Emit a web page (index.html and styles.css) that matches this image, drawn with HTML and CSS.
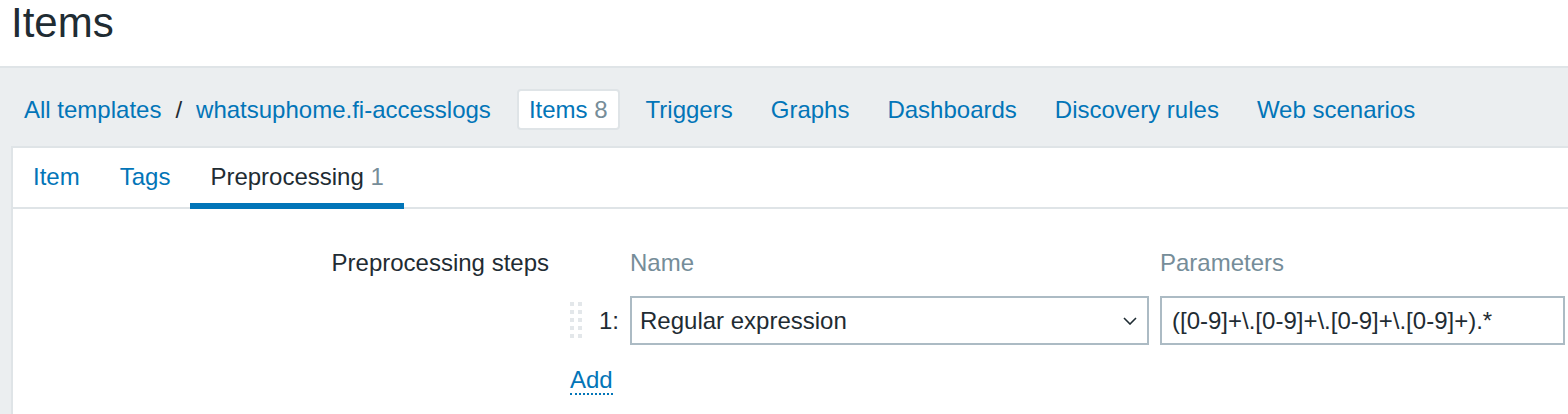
FILE: index.html
```html
<!DOCTYPE html>
<html lang="en">
<head>
    <meta charset="UTF-8">
    <title>Items</title>
    <link rel="stylesheet" href="styles.css">
</head>
<body>
    <header class="page-header">
        <h1>Items</h1>
    </header>
    <div class="main">
        <nav class="breadcrumbs">
            <a href="#">All templates</a>
            <span class="sep">/</span>
            <a href="#">whatsuphome.fi-accesslogs</a>
            <ul class="host-nav">
                <li class="selected"><a href="#">Items <span class="count">8</span></a></li>
                <li><a href="#">Triggers</a></li>
                <li><a href="#">Graphs</a></li>
                <li><a href="#">Dashboards</a></li>
                <li><a href="#">Discovery rules</a></li>
                <li><a href="#">Web scenarios</a></li>
            </ul>
        </nav>
        <div class="content">
            <ul class="tabs">
                <li><a href="#">Item</a></li>
                <li><a href="#">Tags</a></li>
                <li class="active"><a href="#">Preprocessing <span class="count">1</span></a></li>
            </ul>
            <div class="form">
                <label class="form-label">Preprocessing steps</label>
                <div class="steps">
                    <div></div>
                    <div class="col-head">Name</div>
                    <div class="col-head">Parameters</div>

                    <div class="step-num">
                        <svg class="drag" width="12" height="38" viewBox="0 0 12 38">
                            <rect x="0" y="0" width="4" height="4"/><rect x="8" y="0" width="4" height="4"/>
                            <rect x="0" y="8" width="4" height="4"/><rect x="8" y="8" width="4" height="4"/>
                            <rect x="0" y="16" width="4" height="4"/><rect x="8" y="16" width="4" height="4"/>
                            <rect x="0" y="24" width="4" height="4"/><rect x="8" y="24" width="4" height="4"/>
                            <rect x="0" y="32" width="4" height="4"/><rect x="8" y="32" width="4" height="4"/>
                        </svg>
                        <span>1:</span>
                    </div>
                    <div class="select">
                        <span>Regular expression</span>
                        <svg width="14" height="8" viewBox="0 0 14 8"><polyline points="1,1 7,7 13,1" fill="none" stroke="#1f2c33" stroke-width="1.6"/></svg>
                    </div>
                    <div class="input">([0-9]+\.[0-9]+\.[0-9]+\.[0-9]+).*</div>

                    <div class="add-cell"><a href="#" class="link-action">Add</a></div>
                </div>
            </div>
        </div>
    </div>
</body>
</html>
```

FILE: styles.css
```css
body {
    margin: 0;
    font-family: "Liberation Sans", Arial, sans-serif;
    font-size: 24px;
    color: #1f2c33;
    background-color: #ebeef0;
    overflow: hidden;
}
a {
    color: #0275b8;
    text-decoration: none;
}
.count {
    color: #768d99;
}

.page-header {
    height: 66px;
    background-color: white;
}
.page-header h1 {
    margin: 0;
    padding: 1px 0 0 11px;
    font-size: 42px;
    line-height: 44px;
    font-weight: normal;
}

.main {
    border-top: 2px solid #dfe4e7;
    min-height: calc(100vh - 68px);
    display: flex;
    flex-direction: column;
}
.breadcrumbs {
    display: flex;
    align-items: center;
    height: 78px;
    box-sizing: border-box;
    padding: 5px 0 0 24px;
}
.breadcrumbs .sep {
    margin: 0 14px;
}
.host-nav {
    display: flex;
    align-items: center;
    gap: 14px;
    list-style: none;
    margin: 0 0 0 26px;
    padding: 0;
}
.host-nav a {
    display: block;
    padding: 0 12px;
    line-height: 37px;
}
.host-nav .selected a {
    padding: 0 10px;
    background-color: white;
    border: 2px solid #dfe4e7;
    border-radius: 4px;
}

.content {
    flex: 1;
    margin-left: 11px;
    background-color: white;
    border: 2px solid #dfe4e7;
    border-right: 0;
    border-bottom: 0;
}
.tabs {
    display: flex;
    list-style: none;
    margin: 0;
    padding: 0;
    border-bottom: 2px solid #dfe4e7;
}
.tabs a {
    display: block;
    padding: 3px 20px 0;
    line-height: 52px;
    border-bottom: 6px solid transparent;
    margin-bottom: -2px;
}
.tabs .active a {
    color: #1f2c33;
    border-bottom-color: #0275b8;
}

.form {
    display: grid;
    grid-template-columns: 536px 1fr;
    column-gap: 21px;
    padding-top: 39px;
}
.form-label {
    text-align: right;
    line-height: 30px;
}
.steps {
    display: grid;
    grid-template-columns: 49px 519px 405px;
    column-gap: 11px;
    row-gap: 18px;
    align-items: center;
}
.col-head {
    color: #768d99;
    line-height: 30px;
}
.step-num {
    display: flex;
    align-items: center;
    justify-content: space-between;
}
.drag {
    fill: #e3e7ea;
}
.select, .input {
    height: 49px;
    box-sizing: border-box;
    border: 2px solid #acbbc4;
    display: flex;
    align-items: center;
    white-space: nowrap;
}
.select {
    justify-content: space-between;
    padding: 0 10px 0 8px;
}
.input {
    padding: 0 10px;
}
.add-cell {
    grid-column: 1 / span 2;
    margin-top: 3px;
}
.link-action {
    display: inline-block;
    line-height: 26px;
    border-bottom: 2px dotted #0275b8;
}
```
